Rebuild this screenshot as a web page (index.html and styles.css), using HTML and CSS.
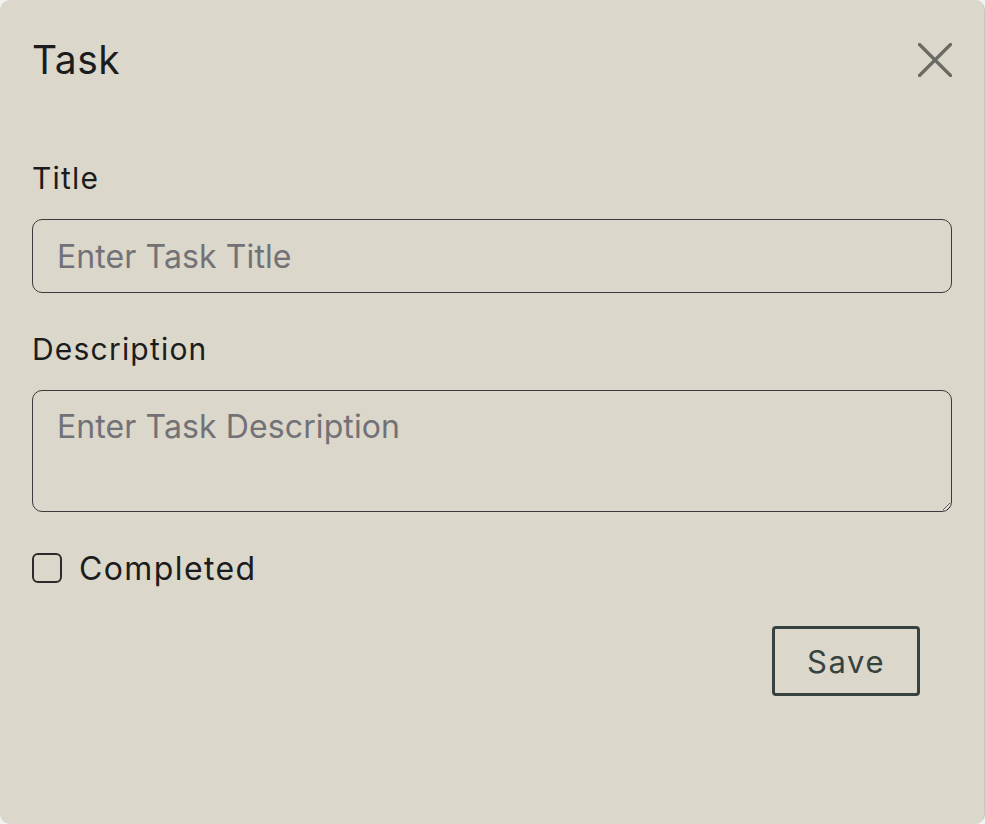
FILE: index.html
```html
<!DOCTYPE html>
<html lang="en">
<head>
<meta charset="utf-8">
<title>Task</title>
<link rel="stylesheet" href="styles.css">
</head>
<body>
<div class="dialog">
  <div class="header">
    <h2 class="heading">Task</h2>
    <button class="close" aria-label="Close">
      <svg width="34" height="34" viewBox="0 0 34 34"><path d="M1.5 1.5 L32.5 32.5 M32.5 1.5 L1.5 32.5" stroke="#6a6a62" stroke-width="3.2" stroke-linecap="round" fill="none"/></svg>
    </button>
  </div>
  <form class="form">
    <label class="label" for="title">Title</label>
    <input id="title" class="field input" type="text" placeholder="Enter Task Title">
    <label class="label label-desc" for="desc">Description</label>
    <textarea id="desc" class="field textarea" placeholder="Enter Task Description"></textarea>
    <div class="check-row">
      <span class="checkbox"></span>
      <span class="check-label">Completed</span>
    </div>
    <div class="actions">
      <button type="button" class="save">Save</button>
    </div>
  </form>
</div>
</body>
</html>
```
FILE: styles.css
```css
html, body {
  margin: 0;
  padding: 0;
  background: #f2f2f0;
}
body {
  font-family: Inter, "Open Sans", sans-serif;
  color: #1c1c1c;
}
.dialog {
  box-sizing: border-box;
  width: 985px;
  height: 824px;
  background: #dbd7cb;
  border-radius: 10px;
  border-right: 1px solid #c9c6bc;
  padding: 28px 32px 0 32px;
}
.header {
  display: flex;
  justify-content: space-between;
  align-items: center;
  height: 64px;
}
.heading {
  margin: 0;
  font-size: 39px;
  font-weight: 400;
  letter-spacing: 0.5px;
  line-height: 64px;
}
.close {
  background: none;
  border: 0;
  padding: 0;
  width: 34px;
  height: 34px;
  display: flex;
}
.form {
  display: flex;
  flex-direction: column;
  margin-top: 66px;
}
.label {
  font-size: 30px;
  line-height: 40px;
  height: 40px;
  letter-spacing: 1.2px;
}
.label-desc {
  margin-top: 36px;
}
.field {
  box-sizing: border-box;
  margin-top: 21px;
  width: 920px;
  background: transparent;
  border: 1.5px solid #3a3a3a;
  border-radius: 10px;
  font-family: Inter, "Open Sans", sans-serif;
  font-size: 32px;
  letter-spacing: 0.1px;
  padding: 0 24px;
  color: #1c1c1c;
}
.field::placeholder {
  color: #727276;
}
.input {
  height: 74px;
}
.textarea {
  height: 122px;
  padding-top: 16px;
  resize: vertical;
}
.check-row {
  display: flex;
  align-items: center;
  margin-top: 41px;
  height: 30px;
}
.checkbox {
  box-sizing: border-box;
  width: 30px;
  height: 30px;
  border: 2px solid #2c2c2c;
  border-radius: 6px;
}
.check-label {
  margin-left: 17px;
  font-size: 32px;
  letter-spacing: 1.4px;
}
.actions {
  display: flex;
  justify-content: flex-end;
  padding-right: 32px;
  margin-top: 43px;
}
.save {
  box-sizing: border-box;
  width: 148px;
  height: 70px;
  background: transparent;
  border: 3px solid #36423f;
  border-radius: 4px;
  font-family: Inter, "Open Sans", sans-serif;
  font-size: 31px;
  color: #36423f;
  letter-spacing: 1.6px;
}
```
